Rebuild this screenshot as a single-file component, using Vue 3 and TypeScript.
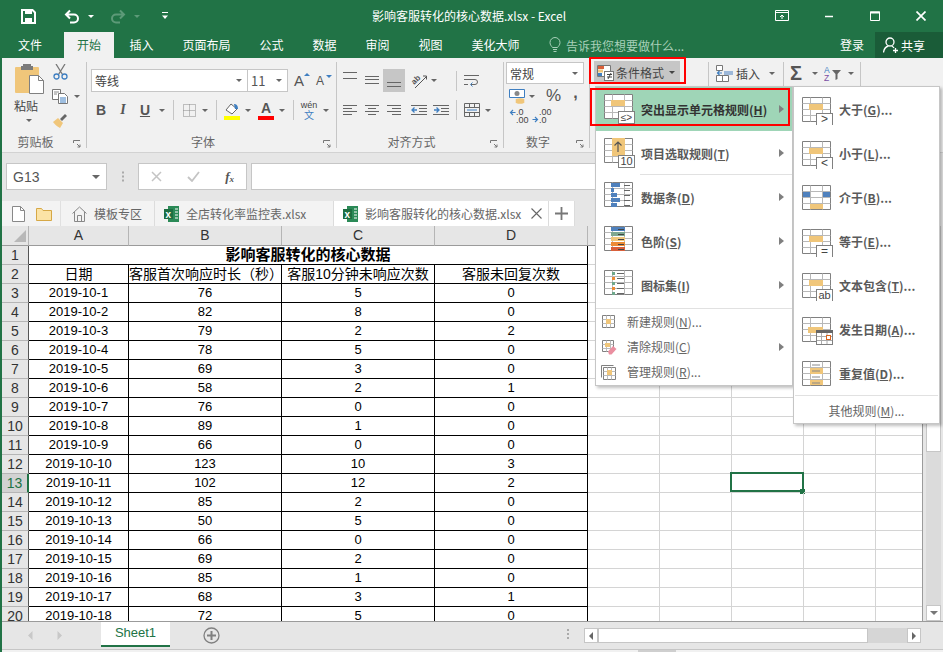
<script setup lang="ts">
const tabs = ['插入', '页面布局', '公式', '数据', '审阅', '视图', '美化大师']

const colHeads = ['A', 'B', 'C', 'D', '', '', '', '', '']

const colB = [76, 82, 79, 78, 69, 58, 76, 89, 66, 123, 102, 85, 50, 66, 69, 85, 68, 72]
const colC = [5, 8, 2, 5, 3, 2, 0, 1, 0, 10, 12, 2, 5, 0, 2, 1, 3, 5]
const colD = [0, 0, 2, 0, 0, 1, 0, 0, 0, 3, 2, 0, 0, 0, 0, 0, 1, 0]

const rows = colB.map((b, i) => ({
  no: i + 3,
  date: `2019-10-${i + 1}`,
  b,
  c: colC[i],
  d: colD[i],
}))
const blanks = [0, 1, 2, 3, 4]

// small spreadsheet drawn behind most of the menu icons
const sheet = (y: number) =>
  `<g transform="translate(0 ${y})"><path d="M.5.5h28v24H.5z" fill="#fff" stroke="#808080"/><path d="M8.5.5v24M20.5.5v24M.5 6.5h28M.5 12.5h28M.5 18.5h28" stroke="#b8b8b8" fill="none"/></g>`
const orange = (x: number, y: number, w: number, h: number) =>
  `<rect x="${x}" y="${y}" width="${w}" height="${h}" fill="#f0c67a"/>`
const badge = (label: string, size = 12, y = 20) =>
  `<rect x="14.5" y="${y + 0.5}" width="16" height="12" fill="#fff" stroke="#808080"/><text x="22.5" y="${y + 10}" font-size="${size}" text-anchor="middle" fill="#444" font-family="Liberation Sans, sans-serif">${label}</text>`

const bars = [9, 3, 6, 9, 6]
  .map((w, i) => `<rect x="7" y="${2 + i * 5}" width="${w}" height="4" fill="#4f81bd"/><path d="M20 ${4.5 + i * 5}h6" stroke="#666"/>`)
  .join('')
const scale = ['#4f81bd', '#7fa890', '#f0c67a', '#ed8b35', '#d9603b']
  .map((c, i) => `<rect x="7" y="${2 + i * 5}" width="14" height="4" fill="${c}"/><path d="M14 ${4.5 + i * 5}h6" stroke="#444"/>`)
  .join('')
const dots = ['#6fa88c', '#ed8b35', '#6fa88c', '#ed8b35', '#6fa88c']
  .map((c, i) => `<rect x="8" y="${3 + i * 5}" width="3" height="3" fill="${c}"/><path d="M13 ${4.5 + i * 5}h7" stroke="#666"/>`)
  .join('')

const mainItems = [
  { t: '突出显示单元格规则', k: 'H', on: true, line: false, icon: sheet(1) + orange(7, 7, 14, 6) + badge('≤&gt;', 10, 18) },
  { t: '项目选取规则', k: 'T', on: false, line: true, icon: sheet(1) + orange(8, 1, 13, 18) + '<path d="M14 15V5M10.5 8.5 14 5l3.5 3.5" stroke="#555" fill="none" stroke-width="1.2"/>' + badge('10', 11, 18) },
  { t: '数据条', k: 'D', on: false, line: false, icon: sheet(1) + bars },
  { t: '色阶', k: 'S', on: false, line: false, icon: sheet(1) + scale },
  { t: '图标集', k: 'I', on: false, line: false, icon: sheet(1) + dots },
]

const smallItems = [
  {
    t: '新建规则', k: 'N', dots: true, arrow: false,
    icon: '<path d="M1.5 1.5h12v12h-12z" fill="#fff" stroke="#808080"/><path d="M5.5 1.5v12M9.5 1.5v12M1.5 5.5h12M1.5 9.5h12" stroke="#bbb"/><rect x="5" y="5" width="5" height="5" fill="#f0c67a"/>',
  },
  {
    t: '清除规则', k: 'C', dots: false, arrow: true,
    icon: '<path d="M1.5 1.5h11v11h-11z" fill="#fff" stroke="#808080"/><path d="M5.5 1.5v11M9.5 1.5v11M1.5 5.5h11M1.5 9.5h11" stroke="#bbb"/><rect x="4" y="4" width="5" height="4" fill="#f0c67a"/><path d="M7 12.5 12 7l3.5 3-5 5.5H8z" fill="#ea8fa0"/>',
  },
  {
    t: '管理规则', k: 'R', dots: true, arrow: false,
    icon: '<path d="M.5 1.5h12M.5 1.5v12" stroke="#808080" fill="none"/><path d="M2.5 3.5h12v12h-12z" fill="#fff" stroke="#808080"/><path d="M6.5 3.5v12M10.5 3.5v12M2.5 7.5h12M2.5 11.5h12" stroke="#bbb"/><rect x="6" y="6" width="5" height="5" fill="#f0c67a"/>',
  },
]

const subItems = [
  { t: '大于', k: 'G', icon: sheet(4) + orange(7, 11, 14, 6) + badge('&gt;') },
  { t: '小于', k: 'L', icon: sheet(4) + orange(7, 11, 14, 6) + badge('&lt;') },
  { t: '介于', k: 'B', icon: sheet(4) + orange(8, 23, 13, 5) + '<rect x="1" y="11" width="7" height="5" fill="#4f81bd"/><rect x="21" y="11" width="7" height="5" fill="#4f81bd"/>' },
  { t: '等于', k: 'E', icon: sheet(4) + orange(7, 11, 14, 6) + badge('=') },
  { t: '文本包含', k: 'T', icon: sheet(4) + orange(7, 11, 14, 6) + badge('ab', 11) },
  {
    t: '发生日期', k: 'A',
    icon: sheet(4) + orange(6, 14, 15, 6) +
      '<rect x="14.5" y="17.5" width="16" height="14" fill="#fff" stroke="#808080"/><rect x="14" y="17" width="17" height="3" fill="#666"/><path d="M19.5 20v11M25 20v11M15 23.5h15M15 27.5h15" stroke="#aaa"/><rect x="24.5" y="22.5" width="4" height="4" fill="#fff" stroke="#d9651f"/>',
  },
  { t: '重复值', k: 'D', icon: sheet(4) + orange(8, 11, 13, 6) + orange(8, 23, 13, 5) + '<path d="M10 8h8M10 14h8M10 20h8M10 26h8" stroke="#888"/>' },
]
</script>

<template>
  <div class="window">
    <header class="titlebar">
      <div class="qat">
        <svg class="save" width="15" height="15" viewBox="0 0 15 15"><path d="M1 1h10.500L14 3.500V14H1z" fill="none" stroke="#fff" stroke-width="2"/><path d="M4 1h7v4H4zM4 9h7v5H4z" fill="#fff"/></svg>
        <svg class="undo" width="16" height="15" viewBox="0 0 16 15"><path d="M2 5.500h8a4 4 0 0 1 0 8H6M6 1.500l-4 4 4 4" fill="none" stroke="#fff" stroke-width="2"/></svg>
        <i class="caret white"></i>
        <svg class="redo" width="16" height="15" viewBox="0 0 16 15"><path d="M14 5.500H6a4 4 0 0 0 0 8h4M10 1.500l4 4-4 4" fill="none" stroke="#5d9a78" stroke-width="2"/></svg>
        <i class="caret dim"></i>
        <svg class="custom" width="8" height="8" viewBox="0 0 8 8"><path d="M1 .5h6" stroke="#fff"/><path d="M1 3.500h6L4 7z" fill="#fff"/></svg>
      </div>
      <div class="doc-title">影响客服转化的核心数据.xlsx - Excel</div>
      <div class="winbtns">
        <svg width="14" height="12" viewBox="0 0 14 12"><path d="M.5.500h13v10H.5zM1 2.500h12" fill="none" stroke="#fff"/><path d="M7 9V5M5 7l2-2 2 2" fill="none" stroke="#fff"/></svg>
        <svg width="10" height="10" viewBox="0 0 10 10"><path d="M1 5.500h8" stroke="#fff" stroke-width="1.500"/></svg>
        <svg width="10" height="10" viewBox="0 0 10 10"><path d="M.5 1h9v8.500h-9z" fill="none" stroke="#fff"/><path d="M0 1.500h10" stroke="#fff" stroke-width="2"/></svg>
        <svg width="10" height="10" viewBox="0 0 10 10"><path d="m.5.500 9 9m0-9-9 9" stroke="#fff" stroke-width="1.700"/></svg>
      </div>
    </header>

    <nav class="tabbar">
      <span class="tab file">文件</span>
      <span class="tab active">开始</span>
      <span v-for="t in tabs" :key="t" class="tab">{{ t }}</span>
      <span class="tell">
        <svg width="12" height="16" viewBox="0 0 12 16"><path d="M3.500 10.500C2.500 9 1 8 1 5.500a5 5 0 0 1 10 0c0 2.500-1.500 3.500-2.500 5zM4 12.500h4M4.500 14.500h3" fill="none" stroke="#a8d0b9"/></svg>
        告诉我您想要做什么...
      </span>
      <span class="login">登录</span>
      <span class="share">
        <svg width="16" height="17" viewBox="0 0 16 17"><circle cx="7" cy="5" r="4" fill="none" stroke="#fff" stroke-width="1.300"/><path d="M.5 15.500c.5-4 3-6 5-6.500m3 0c1 .3 2 1 2.500 2M12.500 11v5M10 13.500h5" fill="none" stroke="#fff" stroke-width="1.300"/></svg>
        共享
      </span>
    </nav>

    <div class="main">
      <section class="ribbon">
        <div class="group g-clip">
          <div class="body clip">
            <div class="paste">
              <svg width="30" height="32" viewBox="0 0 30 32"><rect x="0" y="4" width="24" height="26" rx="1" fill="#f0c67a"/><path d="M8 3h8V1h-8zM6 3h12v4H6z" fill="#7a7a7a"/><path d="M14.500 12.500h9l5 5v13h-14z" fill="#fff" stroke="#808080"/><path d="M23.500 12.500v5h5" fill="none" stroke="#808080"/></svg>
              <span>粘贴</span>
              <i class="caret"></i>
            </div>
            <div class="clip-tools">
              <svg width="15" height="16" viewBox="0 0 15 16"><path d="M3 0l6.500 10.500M12 0 5.500 10.500" stroke="#777" stroke-width="1.300" fill="none"/><circle cx="3.500" cy="12.500" r="2.500" fill="none" stroke="#3f7fc1" stroke-width="1.300"/><circle cx="11.500" cy="12.500" r="2.500" fill="none" stroke="#3f7fc1" stroke-width="1.300"/></svg>
              <span class="row-c">
                <svg width="17" height="15" viewBox="0 0 17 15"><path d="M.5.500h8v10h-8z" fill="#fff" stroke="#777"/><path d="M6.500 4.500h6l3 3v7h-9z" fill="#fff" stroke="#777"/><path d="M8 9h6M8 11h6M8 13h6" stroke="#3f7fc1"/><path d="M2 3h5M2 5h3" stroke="#888"/></svg>
                <i class="caret"></i>
              </span>
              <svg width="16" height="15" viewBox="0 0 16 15"><path d="M1 9l5-4 5 5-3 5c-2-1-5-3-7-6z" fill="#f0c67a"/><path d="m8 6 5-5 2 2-5 5z" fill="#666"/></svg>
            </div>
          </div>
          <div class="glabel"><span></span><span>剪贴板</span><svg class="launch" width="8" height="8" viewBox="0 0 8 8"><path d="M.5 3V.5H7M4 4l3 3M4.500 7H7V4.500" fill="none" stroke="#777"/></svg></div>
        </div>

        <div class="group g-font">
          <div class="body stack">
            <div class="r1">
              <div class="combo fontname"><span>等线</span><i class="caret"></i></div>
              <div class="combo fontsize"><span>11</span><i class="caret"></i></div>
              <span class="grow">A<b class="up"></b></span>
              <span class="grow small">A<b class="down"></b></span>
            </div>
            <div class="r2">
              <span class="fb bold">B</span>
              <span class="fb ital">I</span>
              <span class="fb under">U</span>
              <span class="car w12"><i class="caret"></i></span>
              <span class="vsep s10"></span>
              <span class="ic w22"><svg width="13" height="13" viewBox="0 0 13 13"><path d="M.5.500h12v12H.5zM6.500.500v12M.5 6.500h12" fill="none" stroke="#888" stroke-dasharray="1 1"/></svg></span>
              <span class="car w10"><i class="caret"></i></span>
              <span class="vsep s12"></span>
              <span class="ic w20 col">
                <svg width="16" height="12" viewBox="0 0 16 12"><path d="m2 7 5-6 6 5-5 5z" fill="#fff" stroke="#666"/><path d="M10 1c2 0 4 1 4 5h-3z" fill="#3f7fc1"/></svg>
                <b class="swatch yellow"></b>
              </span>
              <span class="car w12"><i class="caret"></i></span>
              <span class="ic w20 col a-color">A<b class="swatch red"></b></span>
              <span class="car w12"><i class="caret"></i></span>
              <span class="vsep s10"></span>
              <span class="ic w22 wen"><em>wén</em><strong>文</strong></span>
              <span class="car w12"><i class="caret"></i></span>
            </div>
          </div>
          <div class="glabel"><span></span><span>字体</span><svg class="launch" width="8" height="8" viewBox="0 0 8 8"><path d="M.5 3V.5H7M4 4l3 3M4.500 7H7V4.500" fill="none" stroke="#777"/></svg></div>
        </div>

        <div class="group g-align">
          <div class="body stack">
            <div class="r1 acell">
              <span class="ic w22"><svg width="14" height="23" viewBox="0 0 14 23"><path d="M0 3.500h14M0 9.500h14" stroke="#666"/></svg></span>
              <span class="ic w22"><svg width="14" height="23" viewBox="0 0 14 23"><path d="M0 7.500h14M0 10.500h14M0 14.500h14" stroke="#666"/></svg></span>
              <span class="ic w22 pressed"><svg width="14" height="23" viewBox="0 0 14 23"><path d="M0 13.500h14M0 17.500h14" stroke="#666"/></svg></span>
              <span class="ic w22 orient"><svg width="18" height="18" viewBox="0 0 18 18"><text x="1" y="11" font-size="8" font-weight="700" fill="#555" transform="rotate(-45 5 8)" font-family="Liberation Sans, sans-serif">ab</text><path d="M5 16 16 5M13 4h3.500v3.500" stroke="#555" fill="none"/></svg></span>
              <span class="car w8"><i class="caret"></i></span>
              <span class="vsep wrap-sep"></span>
              <svg width="16" height="15" viewBox="0 0 16 15"><path d="M0 2.500h15M0 6.500h11a2.500 2.500 0 0 1 0 5H7M0 11.500h4" fill="none" stroke="#666"/><path d="M8.500 9.500l-2 2 2 2" fill="none" stroke="#3f7fc1"/></svg>
            </div>
            <div class="r2 acell">
              <span class="ic w22"><svg width="14" height="11" viewBox="0 0 14 11"><path d="M0 .5h14M0 3.500h9M0 6.500h14M0 9.500h9" stroke="#666"/></svg></span>
              <span class="ic w22"><svg width="14" height="11" viewBox="0 0 14 11"><path d="M0 .5h14M3 3.500h8M0 6.500h14M3 9.500h8" stroke="#666"/></svg></span>
              <span class="ic w22"><svg width="14" height="11" viewBox="0 0 14 11"><path d="M0 .5h14M5 3.500h9M0 6.500h14M5 9.500h9" stroke="#666"/></svg></span>
              <span class="ic w22 ind1"><svg width="16" height="11" viewBox="0 0 16 11"><path d="M0 .5h16M8 3.500h8M8 6.500h8M0 9.500h16" stroke="#666"/><path d="M6 5H1M3.500 2.500 1 5l2.500 2.500" fill="none" stroke="#3f7fc1" stroke-width="1.300"/></svg></span>
              <span class="ic w22"><svg width="16" height="11" viewBox="0 0 16 11"><path d="M0 .5h16M8 3.500h8M8 6.500h8M0 9.500h16" stroke="#666"/><path d="M1 5h5M3.500 2.500 6 5 3.500 7.500" fill="none" stroke="#3f7fc1" stroke-width="1.300"/></svg></span>
              <span class="vsep merge-sep"></span>
              <svg width="16" height="14" viewBox="0 0 16 14"><path d="M.5.500h15v13H.5zM.5 4.500h15M.5 9.500h15M5.500.500v4M5.500 9.500v4M10.500.500v4M10.500 9.500v4" fill="none" stroke="#666"/><path d="M3 7h10" stroke="#3f7fc1"/></svg>
              <span class="car w16"><i class="caret"></i></span>
            </div>
          </div>
          <div class="glabel"><span></span><span>对齐方式</span><svg class="launch" width="8" height="8" viewBox="0 0 8 8"><path d="M.5 3V.5H7M4 4l3 3M4.500 7H7V4.500" fill="none" stroke="#777"/></svg></div>
        </div>

        <div class="group g-num">
          <div class="body numstack">
            <div class="combo numfmt"><span>常规</span><i class="caret"></i></div>
            <div class="n2">
              <svg width="17" height="15" viewBox="0 0 17 15"><path d="M.5.500h15v8H.5z" fill="#fff" stroke="#3f7fc1"/><circle cx="8" cy="4.500" r="2.500" fill="#888"/><ellipse cx="11" cy="11" rx="4.500" ry="1.800" fill="#f0c67a"/><ellipse cx="11" cy="13" rx="4.500" ry="1.800" fill="#f0c67a"/></svg>
              <span class="car w12"><i class="caret"></i></span>
              <span class="pct">%</span>
              <span class="comma">,</span>
            </div>
            <div class="n3">
              <span class="dec"><svg width="7" height="7" viewBox="0 0 6 7"><path d="M6 3.500H1M3.500 1 1 3.500 3.500 6" fill="none" stroke="#3f7fc1" stroke-width="1.200"/></svg><span>.0<br>.00</span></span>
              <span class="dec"><svg width="7" height="7" viewBox="0 0 6 7" class="low"><path d="M0 3.500h5M2.500 1 5 3.500 2.500 6" fill="none" stroke="#3f7fc1" stroke-width="1.200"/></svg><span>.00<br>.0</span></span>
            </div>
          </div>
          <div class="glabel"><span></span><span>数字</span><svg class="launch" width="8" height="8" viewBox="0 0 8 8"><path d="M.5 3V.5H7M4 4l3 3M4.500 7H7V4.500" fill="none" stroke="#777"/></svg></div>
        </div>

        <div class="group g-style">
          <div class="cond">
            <svg width="17" height="17" viewBox="0 0 17 17"><path d="M.5 1.500h13v11H.5z" fill="#fff" stroke="#777"/><rect x="1" y="2" width="6" height="3" fill="#d9603b"/><rect x="1" y="5.500" width="5" height="3" fill="#f0c67a"/><rect x="1" y="9" width="4" height="3" fill="#3f7fc1"/><rect x="7.500" y="7.500" width="9" height="9" fill="#fff" stroke="#777"/><path d="M10 10.500h5M10 13h5M14 9l-3 6" stroke="#444" fill="none"/></svg>
            <span>条件格式</span>
            <i class="caret"></i>
          </div>
        </div>

        <div class="group g-cell">
          <div class="cellrow">
            <svg width="17" height="17" viewBox="0 0 17 17"><path d="M.5.500h6v5h-6zM.5 10.500h6v6h-6zM6.500 10.500h6v6h-6z" fill="#fff" stroke="#777"/><path d="M8 6h9v4H8z" fill="#9db8d9"/><path d="M6 8H1.500M3.500 6 1.500 8l2 2" fill="none" stroke="#3f7fc1" stroke-width="1.200"/></svg>
            <span>插入</span>
            <i class="caret"></i>
          </div>
        </div>

        <div class="group g-edit">
          <div class="editrow">
            <span class="sigma">Σ</span>
            <i class="caret"></i>
            <svg class="sort" width="18" height="17" viewBox="0 0 18 17"><text x="0" y="8" font-size="8.500" fill="#3f7fc1" font-family="Liberation Sans, sans-serif">A</text><text x="0" y="16" font-size="8.500" fill="#7a4fa3" font-family="Liberation Sans, sans-serif">Z</text><path d="M8 5h9l-3.500 4v5l-2 1V9z" fill="#666"/></svg>
            <i class="caret"></i>
          </div>
        </div>
      </section>

      <section class="formula">
        <div class="namebox"><span>G13</span><i class="caret"></i></div>
        <span class="grip"></span>
        <div class="fxbox">
          <svg width="11" height="11" viewBox="0 0 11 11"><path d="m1 1 9 9m0-9-9 9" stroke="#c4c4c4" stroke-width="1.500"/></svg>
          <svg width="13" height="11" viewBox="0 0 13 11"><path d="m1 6 4 4 7-9" fill="none" stroke="#c4c4c4" stroke-width="1.800"/></svg>
          <span class="fx">f<sub>x</sub></span>
        </div>
        <div class="input"></div>
      </section>

      <section class="docbar">
        <div class="doc-tools">
          <svg width="13" height="16" viewBox="0 0 13 16"><path d="M.5.500h8l4 4v11H.5z" fill="#fff" stroke="#888"/><path d="M8.500.500v4h4" fill="none" stroke="#888"/></svg>
          <svg width="16" height="14" viewBox="0 0 16 14"><path d="M.5 1.500h5l1.500 2h8.500v10H.5z" fill="#fbe3a6" stroke="#d6a846"/></svg>
        </div>
        <div class="doc home">
          <svg width="15" height="16" viewBox="0 0 15 16"><path d="M.5 7.500 7.500 1l7 6.500M2.500 6v9.500h10V6M5.500 15.500V9.500h4v6" fill="none" stroke="#888"/></svg>
          <span>模板专区</span>
        </div>
        <div class="doc other">
          <svg width="15" height="16" viewBox="0 0 15 16"><path d="M4 0h11v16H4z" fill="#2b8a57"/><path d="M0 3h9v10H0z" fill="#1d6f42"/><text x="1.500" y="11.500" font-size="10" font-weight="700" fill="#fff" font-family="Liberation Sans, sans-serif">x</text><path d="M11 3h3M11 6h3M11 9h3M11 12h3" stroke="#fff"/></svg>
          <span>全店转化率监控表.xlsx</span>
        </div>
        <div class="doc current">
          <svg width="15" height="16" viewBox="0 0 15 16"><path d="M4 0h11v16H4z" fill="#2b8a57"/><path d="M0 3h9v10H0z" fill="#1d6f42"/><text x="1.500" y="11.500" font-size="10" font-weight="700" fill="#fff" font-family="Liberation Sans, sans-serif">x</text><path d="M11 3h3M11 6h3M11 9h3M11 12h3" stroke="#fff"/></svg>
          <span>影响客服转化的核心数据.xlsx</span>
          <svg class="docx" width="11" height="11" viewBox="0 0 11 11"><path d="m.5.500 10 10m0-10-10 10" stroke="#666" stroke-width="1.100"/></svg>
        </div>
        <div class="doc plus">
          <svg width="13" height="13" viewBox="0 0 13 13"><path d="M6.500 0v13M0 6.500h13" stroke="#777" stroke-width="1.800"/></svg>
        </div>
      </section>

      <section class="sheetarea">
        <div class="grid">
          <div class="corner"><svg width="15" height="15" viewBox="0 0 15 15"><path d="M14 2v12H2z" fill="#b8b8b8"/></svg></div>
          <div v-for="(c, i) in colHeads" :key="i" class="colhead">{{ c }}</div>

          <div class="rowhead">1</div>
          <div class="cell title">影响客服转化的核心数据</div>
          <div v-for="n in blanks" :key="'a' + n" class="blank"></div>

          <div class="rowhead">2</div>
          <div class="cell head">日期</div>
          <div class="cell head">客服首次响应时长（秒）</div>
          <div class="cell head">客服10分钟未响应次数</div>
          <div class="cell head">客服未回复次数</div>
          <div v-for="n in blanks" :key="'b' + n" class="blank"></div>

          <template v-for="r in rows" :key="r.no">
            <div class="rowhead" :class="{ hot: r.no === 13 }">{{ r.no }}</div>
            <div class="cell">{{ r.date }}</div>
            <div class="cell">{{ r.b }}</div>
            <div class="cell">{{ r.c }}</div>
            <div class="cell">{{ r.d }}</div>
            <div v-for="n in blanks" :key="n" class="blank">
              <template v-if="r.no === 13 && n === 2"><span class="selbox"></span><span class="handle"></span></template>
            </div>
          </template>
        </div>
        <aside class="vscroll">
          <div class="vthumb"></div>
          <div class="vtrack"></div>
          <div class="vbtn"><i class="caret"></i></div>
        </aside>
      </section>

      <footer class="sheetbar">
        <span class="nav">
          <svg width="5" height="9" viewBox="0 0 5 9"><path d="M4.500 0v9L0 4.500z" fill="#c8c8c8"/></svg>
          <svg width="5" height="9" viewBox="0 0 5 9"><path d="M.5 0v9L5 4.500z" fill="#c8c8c8"/></svg>
        </span>
        <span class="sheettab">Sheet1</span>
        <svg class="addsheet" width="17" height="17" viewBox="0 0 17 17"><circle cx="8.500" cy="8.500" r="7.500" fill="none" stroke="#808080" stroke-width="1.300"/><path d="M8.500 4v9M4 8.500h9" stroke="#808080" stroke-width="2"/></svg>
        <span class="vdots"></span>
        <div class="hscroll">
          <span class="hbtn"><svg width="4" height="8" viewBox="0 0 4 8"><path d="M4 0v8L0 4z" fill="#666"/></svg></span>
          <span class="hthumb"></span>
          <span class="htrack"></span>
          <span class="hbtn"><svg width="4" height="8" viewBox="0 0 4 8"><path d="M0 0v8l4-4z" fill="#666"/></svg></span>
        </div>
      </footer>
      <div class="status"><span></span></div>
    </div>

    <!-- open dropdown menus, they sit over the ribbon and the grid -->
    <div class="menu menu-main">
      <div
        v-for="m in mainItems"
        :key="m.t"
        class="mitem"
        :class="{ on: m.on, lined: m.line }"
      >
        <svg width="32" height="32" viewBox="0 0 32 32" v-html="m.icon"></svg>
        <span class="mtext">{{ m.t }}(<u>{{ m.k }}</u>)</span>
        <b class="arrow"></b>
      </div>
      <div class="msep"></div>
      <div v-for="s in smallItems" :key="s.t" class="sitem">
        <svg width="16" height="16" viewBox="0 0 16 16" v-html="s.icon"></svg>
        <span class="stext">{{ s.t }}(<u>{{ s.k }}</u>){{ s.dots ? '...' : '' }}</span>
        <b v-if="s.arrow" class="arrow"></b>
      </div>
    </div>

    <div class="menu menu-sub">
      <div v-for="s in subItems" :key="s.t" class="subitem">
        <svg width="32" height="32" viewBox="0 0 32 32" v-html="s.icon"></svg>
        <span class="mtext">{{ s.t }}(<u>{{ s.k }}</u>)...</span>
      </div>
      <div class="subsep"></div>
      <div class="more">其他规则(<u>M</u>)...</div>
    </div>

    <div class="redbox red-btn"></div>
    <div class="redbox red-item"></div>
  </div>
</template>

<style>
html,
body {
  margin: 0;
  overflow: hidden;
}
</style>

<style scoped>
.window {
  position: relative;
  width: 943px;
  height: 652px;
  overflow: hidden;
  display: flex;
  flex-direction: column;
  background: #e6e6e6;
  font-family: "Noto Sans CJK SC", "Liberation Sans", sans-serif;
  font-size: 12px;
  color: #444;
}
svg {
  display: block;
  flex: none;
}
.caret {
  display: block;
  flex: none;
  width: 0;
  height: 0;
  border-style: solid;
  border-width: 3px 3px 0;
  border-color: #666 transparent transparent;
}
.caret.white {
  border-top-color: #fff;
  margin-left: 8px;
}
.caret.dim {
  border-top-color: #5d9a78;
  margin-left: 8px;
}

.titlebar {
  height: 32px;
  flex: none;
  display: flex;
  align-items: center;
  background: #217346;
  color: #fff;
}
.qat {
  width: 372px;
  flex: none;
  display: flex;
  align-items: center;
  padding-left: 21px;
  box-sizing: border-box;
}
.undo {
  margin-left: 28px;
}
.redo {
  margin-left: 16px;
}
.custom {
  margin-left: 21px;
}
.doc-title {
  flex: 1;
  line-height: 30px;
  height: 30px;
}
.winbtns {
  display: flex;
  align-items: center;
  padding-right: 17px;
}
.winbtns svg + svg {
  margin-left: 36px;
}
.winbtns svg:first-child + svg {
  margin-left: 35px;
}

.tabbar {
  height: 26px;
  flex: none;
  display: flex;
  align-items: stretch;
  background: #217346;
  color: #fff;
}
.tab {
  padding: 0 14.5px;
  line-height: 25px;
}
.tab.file {
  padding: 0 22px 0 18px;
}
.tab.active {
  background: #f1f1f1;
  color: #217346;
  padding: 0 13px;
  margin-right: 1px;
}
.tell {
  display: flex;
  align-items: center;
  gap: 5px;
  margin-left: 15px;
  color: #a8d0b9;
  width: 291px;
}
.login {
  line-height: 25px;
  width: 35px;
}
.share {
  width: 68px;
  display: flex;
  align-items: center;
  gap: 2px;
  padding-left: 8px;
  box-sizing: border-box;
  background: #1a5c38;
}

.main {
  flex: 1;
  min-height: 0;
  display: flex;
  flex-direction: column;
  border-left: 2px solid #217346;
}

.ribbon {
  height: 95px;
  flex: none;
  box-sizing: border-box;
  display: flex;
  align-items: flex-start;
  padding-top: 4px;
  background: #f1f1f1;
  border-bottom: 1px solid #d2d2d2;
}
.group {
  height: 86px;
  box-sizing: border-box;
  border-right: 1px solid #c6c6c6;
  display: flex;
  flex-direction: column;
}
.g-clip { width: 85px; }
.g-font { width: 250px; }
.g-align { width: 167px; }
.g-num { width: 86px; }
.g-style { width: 119px; }
.g-cell { width: 75px; }
.g-edit { width: 77px; }
.body {
  flex: 1;
  min-height: 0;
}
.glabel {
  height: 14px;
  line-height: 14px;
  margin-bottom: -1px;
  padding-right: 17px;
  display: grid;
  grid-template-columns: 1fr auto 1fr;
  align-items: center;
  color: #666;
}
.launch {
  justify-self: end;
  margin: 4px -12px 0 0;
}

.clip {
  display: flex;
  padding-left: 12px;
}
.paste {
  width: 38px;
  display: flex;
  flex-direction: column;
  align-items: flex-start;
  padding: 1px 0 0 1px;
  box-sizing: border-box;
}
.paste span {
  line-height: 16px;
  margin: 3px 0 0 -1px;
}
.paste .caret {
  margin: 5px 0 0 11px;
}
.clip-tools {
  display: flex;
  flex-direction: column;
  gap: 9px;
  margin-top: -1px;
  padding-top: 3px;
}
.clip-tools > svg:first-child {
  margin-left: 1px;
}
.row-c {
  display: flex;
  align-items: center;
  gap: 5px;
}

.stack {
  padding-top: 7px;
}
.r1,
.r2 {
  display: flex;
  align-items: center;
}
.r1 {
  height: 23px;
}
.r2 {
  height: 20px;
  margin-top: 8px;
}
.g-font .r1 {
  padding-left: 4px;
}
.g-font .r2 {
  padding-left: 3px;
}
.combo {
  height: 23px;
  box-sizing: border-box;
  display: flex;
  align-items: center;
  justify-content: space-between;
  padding: 0 5px 0 3px;
  background: #fff;
  border: 1px solid #c6c6c6;
  font-size: 12px;
}
.fontname {
  width: 157px;
}
.fontsize {
  width: 41px;
  margin-left: -1px;
}
.fontsize span {
  font-size: 13px;
  color: #555;
}
.grow {
  position: relative;
  width: 16px;
  margin-left: 6px;
  font: 15px "Liberation Sans", sans-serif;
  color: #555;
}
.grow.small {
  font-size: 12px;
  margin-left: 6px;
}
.grow b {
  position: absolute;
  right: 0;
  top: 1px;
  width: 0;
  height: 0;
  border-left: 3px solid transparent;
  border-right: 3px solid transparent;
}
.grow .up {
  border-bottom: 3px solid #3f7fc1;
}
.grow .down {
  border-top: 3px solid #3f7fc1;
}
.fb {
  width: 22px;
  text-align: center;
  font: 14px "Liberation Sans", sans-serif;
  color: #555;
}
.bold { font-weight: 700; }
.ital { font-style: italic; font-family: "Liberation Serif", serif; font-weight: 700; }
.under { text-decoration: underline; font-weight: 700; }
.ic {
  display: flex;
  align-items: center;
  justify-content: center;
  height: 100%;
  flex: none;
}
.col {
  flex-direction: column;
  justify-content: flex-end;
}
.w20 { width: 20px; }
.w22 { width: 22px; }
.car {
  display: flex;
  align-items: center;
  justify-content: center;
  flex: none;
}
.w8 { width: 8px; }
.w10 { width: 10px; }
.w12 { width: 12px; }
.w16 { width: 16px; }
.vsep {
  flex: none;
  height: 20px;
  display: block;
  position: relative;
}
.vsep::after {
  content: "";
  display: block;
  width: 1px;
  height: 100%;
  margin: 0 auto;
  background: #c6c6c6;
}
.s10 { width: 10px; }
.s12 { width: 12px; }
.swatch {
  display: block;
  width: 16px;
  height: 4px;
  margin-top: 1px;
}
.yellow { background: #ffff00; }
.red { background: #ff0000; }
.a-color {
  font: 700 14px/14px "Liberation Sans", sans-serif;
  color: #555;
  margin-left: 2px;
}
.wen {
  flex-direction: column;
}
.wen em {
  font: 9px/10px "Liberation Sans", sans-serif;
  font-style: normal;
}
.wen strong {
  font-size: 10px;
  font-weight: 400;
  color: #3f7fc1;
  line-height: 10px;
}

.acell {
  padding-left: 2px;
}
.pressed {
  background: #c6c6c6;
}
.orient {
  margin-left: 3px;
}
.wrap-sep {
  width: 1px;
  margin: 0 7px 0 18px;
}
.ind1 {
  margin-left: 3px;
}
.merge-sep {
  width: 1px;
  margin: 0 7px 0 4px;
}

.numstack {
  display: flex;
  flex-direction: column;
  padding-left: 2px;
}
.numfmt {
  width: 78px;
  height: 22px;
}
.n2 {
  display: flex;
  align-items: center;
  height: 24px;
  margin-left: 3px;
}
.pct {
  font: 17px "Liberation Sans", sans-serif;
  color: #555;
  margin-left: 8px;
}
.comma {
  font: 700 16px/14px "Liberation Sans", sans-serif;
  color: #555;
  margin-left: 12px;
  margin-top: -6px;
}
.n3 {
  display: flex;
  gap: 3px;
  margin-left: 3px;
}
.dec {
  display: flex;
  align-items: flex-start;
  width: 20px;
  font: 9px/8px "Liberation Sans", sans-serif;
  color: #444;
}
.dec svg {
  margin-top: 1px;
}
.dec .low {
  margin-top: 8px;
}

.cond {
  width: 86px;
  height: 22px;
  box-sizing: border-box;
  margin: -1px 0 0 4px;
  padding-left: 3px;
  display: flex;
  align-items: center;
  gap: 2px;
  background: #c6c6c6;
}
.cond .caret {
  margin-left: 3px;
  border-top-color: #444;
}
.cellrow {
  display: flex;
  align-items: center;
  gap: 3px;
  height: 22px;
  padding-left: 7px;
}
.cellrow .caret {
  margin-left: 6px;
}
.editrow {
  display: flex;
  align-items: center;
  height: 22px;
  padding-left: 6px;
}
.sigma {
  font: 700 20px/20px "Liberation Sans", sans-serif;
  color: #555;
  width: 16px;
}
.editrow .caret {
  margin-left: 6px;
}
.sort {
  margin-left: 6px;
}

.formula {
  height: 48px;
  flex: none;
  box-sizing: border-box;
  display: flex;
  padding: 10px 3px 11px 4px;
  background: #e6e6e6;
}
.namebox {
  width: 101px;
  box-sizing: border-box;
  display: flex;
  align-items: center;
  justify-content: space-between;
  padding: 0 6px 0 6px;
  background: #fff;
  border: 1px solid #c6c6c6;
  font: 14px "Liberation Sans", sans-serif;
  color: #555;
}
.namebox .caret {
  border-width: 4px 4px 0;
}
.grip {
  width: 31px;
  flex: none;
  background: radial-gradient(circle, #aaa 1px, transparent 1.2px) center / 2px 4px repeat-y;
  background-clip: content-box;
  padding: 7px 0;
  box-sizing: border-box;
}
.fxbox {
  width: 109px;
  box-sizing: border-box;
  display: flex;
  align-items: center;
  justify-content: space-between;
  padding: 0 12px;
  background: #fff;
  border: 1px solid #c6c6c6;
}
.fx {
  font: italic 700 13px "Liberation Serif", serif;
  color: #555;
}
.fx sub {
  font-size: 9px;
  vertical-align: -1px;
}
.input {
  flex: 1;
  margin-left: 4px;
  background: #fff;
  border: 1px solid #c6c6c6;
}

.docbar {
  height: 25px;
  flex: none;
  display: flex;
  background: #e6e6e6;
}
.doc-tools {
  width: 59px;
  box-sizing: border-box;
  display: flex;
  align-items: center;
  gap: 11px;
  padding-left: 10px;
  background: #f3f3f3;
  border-right: 1px solid #e0e0e0;
}
.doc {
  display: flex;
  align-items: center;
  box-sizing: border-box;
  gap: 7px;
  background: #f3f3f3;
  border-right: 1px solid #dcdcdc;
  color: #666;
  white-space: nowrap;
}
.home {
  width: 94px;
  padding-left: 11px;
}
.other {
  width: 179px;
  padding-left: 9px;
}
.current {
  width: 215px;
  padding-left: 9px;
  background: #fff;
}
.docx {
  margin-left: 3px;
}
.plus {
  width: 26px;
  justify-content: center;
  background: #fff;
}

.sheetarea {
  flex: 1;
  min-height: 0;
  display: flex;
}
.grid {
  width: 921px;
  flex: none;
  overflow: hidden;
  display: grid;
  grid-template-columns: 27px 100px 153px 153px 153px 72px 72px 72px 72px 47px;
  grid-auto-rows: 19px;
  grid-template-rows: 20px;
  background: #fff;
  color: #000;
  font: 13px/18px "Liberation Sans", "Noto Sans CJK SC", sans-serif;
  border-right: 1px solid #9b9b9b;
  box-sizing: border-box;
}
.corner {
  box-sizing: border-box;
  background: #e6e6e6;
  border-right: 1px solid #b5b5b5;
  border-bottom: 1px solid #9b9b9b;
  display: flex;
  align-items: center;
  justify-content: flex-end;
  padding-right: 1px;
}
.colhead {
  box-sizing: border-box;
  background: #e6e6e6;
  border-right: 1px solid #b5b5b5;
  border-bottom: 1px solid #9b9b9b;
  text-align: center;
  font-size: 14px;
  color: #333;
}
.rowhead {
  box-sizing: border-box;
  background: #e6e6e6;
  border-right: 1px solid #555;
  border-bottom: 1px solid #b5b5b5;
  text-align: center;
  font-size: 14px;
  color: #333;
}
.rowhead.hot {
  background: #d2d2d2;
  border-right: 2px solid #217346;
  color: #217346;
}
.cell {
  box-sizing: border-box;
  border-right: 1px solid #000;
  border-bottom: 1px solid #000;
  text-align: center;
  white-space: nowrap;
  overflow: hidden;
}
.title {
  grid-column: span 4;
  font-weight: 700;
  font-size: 15px;
}
.head {
  font-size: 14px;
}
.blank {
  box-sizing: border-box;
  border-right: 1px solid #d4d4d4;
  border-bottom: 1px solid #d4d4d4;
  position: relative;
}
.selbox {
  position: absolute;
  left: -2px;
  top: -2px;
  right: -1px;
  bottom: 0;
  border: 2px solid #217346;
}
.handle {
  position: absolute;
  right: -2px;
  bottom: -2px;
  width: 5px;
  height: 5px;
  background: #217346;
}

.vscroll {
  width: 20px;
  flex: none;
  display: flex;
  flex-direction: column;
  padding: 0 2px 0 3px;
  box-sizing: border-box;
}
.vthumb {
  height: 226px;
  flex: none;
  box-sizing: border-box;
  background: #fff;
  border: 1px solid #c6c6c6;
}
.vtrack {
  flex: 1;
  background: #dbdbdb;
}
.vbtn {
  height: 14px;
  flex: none;
  display: flex;
  align-items: center;
  justify-content: center;
  background: #fff;
  border: 1px solid #c6c6c6;
}
.vbtn .caret {
  border-width: 4px 4px 0;
  border-top-color: #777;
}

.sheetbar {
  height: 28px;
  flex: none;
  box-sizing: border-box;
  display: flex;
  align-items: flex-start;
  background: #e6e6e6;
  border-top: 1px solid #9b9b9b;
}
.nav {
  width: 99px;
  flex: none;
  display: flex;
  gap: 24px;
  padding: 9px 0 0 26px;
  box-sizing: border-box;
}
.sheettab {
  width: 69px;
  height: 25px;
  box-sizing: border-box;
  text-align: center;
  background: #fff;
  border-bottom: 2px solid #217346;
  color: #217346;
  font: 13px/22px "Liberation Sans", sans-serif;
}
.addsheet {
  margin: 5px 0 0 33px;
}
.vdots {
  width: 2px;
  height: 12px;
  margin: 7px 0 0 347px;
  flex: none;
  background: repeating-linear-gradient(#aaa 0 2px, transparent 2px 4px);
}
.hscroll {
  display: flex;
  margin: 6px 0 0 15px;
  height: 15px;
}
.hbtn {
  width: 14px;
  box-sizing: border-box;
  display: flex;
  align-items: center;
  justify-content: center;
  background: #fff;
  border: 1px solid #c6c6c6;
}
.hthumb {
  width: 270px;
  background: #fff;
  border: 1px solid #c6c6c6;
  box-sizing: border-box;
}
.htrack {
  width: 39px;
  background: #d6d6d6;
}
.status {
  height: 3px;
  flex: none;
  box-sizing: border-box;
  background: #f1f1f1;
  border-top: 1px solid #c6c6c6;
  padding-left: 636px;
}
.status span {
  display: block;
  width: 38px;
  height: 100%;
  background: #cfcfcf;
}

.menu {
  position: absolute;
  box-sizing: border-box;
  background: #fff;
  border: 1px solid #c6c6c6;
  box-shadow: 2px 2px 3px rgba(0, 0, 0, 0.25);
}
.menu-main {
  left: 595px;
  top: 86px;
  width: 198px;
  height: 300px;
}
.mitem {
  height: 44px;
  box-sizing: border-box;
  display: flex;
  align-items: center;
  padding-left: 8px;
  position: relative;
}
.mitem.on {
  background: #9fd5b7;
}
.mitem.lined::after {
  content: "";
  position: absolute;
  left: 44px;
  right: 0;
  bottom: 0;
  height: 1px;
  background: #e1e1e1;
}
.mtext {
  margin-left: 5px;
  font-weight: 700;
  color: #5a5a5a;
  white-space: nowrap;
}
.on .mtext {
  color: #333;
}
.arrow {
  display: block;
  width: 0;
  height: 0;
  margin-left: auto;
  margin-right: 8px;
  border-left: 5px solid #7f7f7f;
  border-top: 4px solid transparent;
  border-bottom: 4px solid transparent;
}
.msep {
  height: 1px;
  margin-top: 1px;
  background: #e1e1e1;
}
.sitem {
  height: 25px;
  display: flex;
  align-items: center;
  padding-left: 5px;
}
.stext {
  margin-left: 10px;
  color: #666;
  white-space: nowrap;
}
.menu-sub {
  left: 793px;
  top: 86px;
  width: 147px;
  height: 338px;
}
.subitem {
  height: 44px;
  display: flex;
  align-items: center;
  padding-left: 8px;
}
.subsep {
  height: 1px;
  margin: 0 1px;
  background: #e1e1e1;
}
.more {
  text-align: center;
  line-height: 30px;
  color: #666;
}
.redbox {
  position: absolute;
  box-sizing: border-box;
  border: 2px solid #ff0000;
}
.red-btn {
  left: 589px;
  top: 57px;
  width: 97px;
  height: 27px;
}
.red-item {
  left: 590px;
  top: 88px;
  width: 200px;
  height: 38px;
}
</style>
